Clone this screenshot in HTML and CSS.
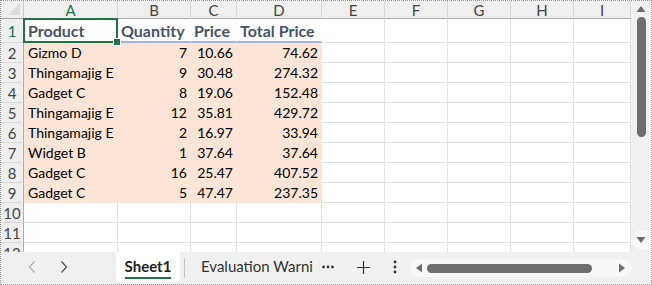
FILE: index.html
```html
<!DOCTYPE html>
<html lang="en">
<head>
    <meta charset="UTF-8">
    <title>Sheet1</title>
    <link rel="stylesheet" href="styles.css">
</head>
<body>
    <div class="frame">
        <div class="main">
            <div class="sheet">
                <div class="grid">
                    <div class="corner"><span class="corner-tri"></span></div>
                    <div class="col-head sel">A</div>
                    <div class="col-head">B</div>
                    <div class="col-head">C</div>
                    <div class="col-head">D</div>
                    <div class="col-head">E</div>
                    <div class="col-head">F</div>
                    <div class="col-head">G</div>
                    <div class="col-head">H</div>
                    <div class="col-head">I</div>

                    <div class="row-head sel first">1</div>
                    <div class="cell head active">Product</div>
                    <div class="cell head line">Quantity</div>
                    <div class="cell head line">Price</div>
                    <div class="cell head line">Total Price</div>
                    <div class="cell first"></div><div class="cell first"></div><div class="cell first"></div><div class="cell first"></div><div class="cell first"></div>

                    <div class="row-head">2</div>
                    <div class="cell data">Gizmo D</div><div class="cell data num">7</div><div class="cell data num">10.66</div><div class="cell data num">74.62</div>
                    <div class="cell"></div><div class="cell"></div><div class="cell"></div><div class="cell"></div><div class="cell"></div>

                    <div class="row-head">3</div>
                    <div class="cell data">Thingamajig E</div><div class="cell data num">9</div><div class="cell data num">30.48</div><div class="cell data num">274.32</div>
                    <div class="cell"></div><div class="cell"></div><div class="cell"></div><div class="cell"></div><div class="cell"></div>

                    <div class="row-head">4</div>
                    <div class="cell data">Gadget C</div><div class="cell data num">8</div><div class="cell data num">19.06</div><div class="cell data num">152.48</div>
                    <div class="cell"></div><div class="cell"></div><div class="cell"></div><div class="cell"></div><div class="cell"></div>

                    <div class="row-head">5</div>
                    <div class="cell data">Thingamajig E</div><div class="cell data num">12</div><div class="cell data num">35.81</div><div class="cell data num">429.72</div>
                    <div class="cell"></div><div class="cell"></div><div class="cell"></div><div class="cell"></div><div class="cell"></div>

                    <div class="row-head">6</div>
                    <div class="cell data">Thingamajig E</div><div class="cell data num">2</div><div class="cell data num">16.97</div><div class="cell data num">33.94</div>
                    <div class="cell"></div><div class="cell"></div><div class="cell"></div><div class="cell"></div><div class="cell"></div>

                    <div class="row-head">7</div>
                    <div class="cell data">Widget B</div><div class="cell data num">1</div><div class="cell data num">37.64</div><div class="cell data num">37.64</div>
                    <div class="cell"></div><div class="cell"></div><div class="cell"></div><div class="cell"></div><div class="cell"></div>

                    <div class="row-head">8</div>
                    <div class="cell data">Gadget C</div><div class="cell data num">16</div><div class="cell data num">25.47</div><div class="cell data num">407.52</div>
                    <div class="cell"></div><div class="cell"></div><div class="cell"></div><div class="cell"></div><div class="cell"></div>

                    <div class="row-head">9</div>
                    <div class="cell data">Gadget C</div><div class="cell data num">5</div><div class="cell data num">47.47</div><div class="cell data num">237.35</div>
                    <div class="cell"></div><div class="cell"></div><div class="cell"></div><div class="cell"></div><div class="cell"></div>

                    <div class="row-head">10</div>
                    <div class="cell"></div><div class="cell"></div><div class="cell"></div><div class="cell"></div>
                    <div class="cell"></div><div class="cell"></div><div class="cell"></div><div class="cell"></div><div class="cell"></div>

                    <div class="row-head">11</div>
                    <div class="cell"></div><div class="cell"></div><div class="cell"></div><div class="cell"></div>
                    <div class="cell"></div><div class="cell"></div><div class="cell"></div><div class="cell"></div><div class="cell"></div>

                    <div class="row-head">12</div>
                    <div class="cell"></div><div class="cell"></div><div class="cell"></div><div class="cell"></div>
                    <div class="cell"></div><div class="cell"></div><div class="cell"></div><div class="cell"></div><div class="cell"></div>
                </div>
            </div>
            <div class="vscroll">
                <svg class="arrow" width="10" height="8" viewBox="0 0 10 8"><path d="M5 1 L9.5 7 L0.5 7 Z" fill="#6e6e6e"/></svg>
                <div class="vthumb"></div>
                <div class="vspace"></div>
                <div class="vdown">
                    <svg class="arrow" width="10" height="8" viewBox="0 0 10 8"><path d="M0.5 1 L9.5 1 L5 7 Z" fill="#6e6e6e"/></svg>
                </div>
            </div>
        </div>
        <div class="tabbar">
            <div class="nav">
                <svg width="10" height="14" viewBox="0 0 10 14"><path d="M7.5 1.5 L2.5 7 L7.5 12.5" fill="none" stroke="#b4b4b4" stroke-width="1.3"/></svg>
                <svg width="10" height="14" viewBox="0 0 10 14"><path d="M2.5 1.5 L7.5 7 L2.5 12.5" fill="none" stroke="#555" stroke-width="1.3"/></svg>
            </div>
            <div class="tab active-tab"><span>Sheet1</span></div>
            <div class="sep"></div>
            <div class="tab other-tab">Evaluation Warni</div>
            <div class="more">
                <svg width="12" height="4" viewBox="0 0 12 4"><circle cx="1.5" cy="2" r="1.4" fill="#333"/><circle cx="6" cy="2" r="1.4" fill="#333"/><circle cx="10.5" cy="2" r="1.4" fill="#333"/></svg>
            </div>
            <div class="add">
                <svg width="13" height="13" viewBox="0 0 13 13"><path d="M6.5 0 V13 M0 6.5 H13" stroke="#333" stroke-width="1.2"/></svg>
            </div>
            <div class="kebab">
                <svg width="4" height="14" viewBox="0 0 4 14"><circle cx="2" cy="2" r="1.4" fill="#333"/><circle cx="2" cy="7" r="1.4" fill="#333"/><circle cx="2" cy="12" r="1.4" fill="#333"/></svg>
            </div>
            <div class="hscroll">
                <svg width="8" height="10" viewBox="0 0 8 10"><path d="M1 5 L7 0.5 L7 9.5 Z" fill="#6e6e6e"/></svg>
                <div class="hthumb"></div>
                <svg width="8" height="10" viewBox="0 0 8 10"><path d="M7 5 L1 0.5 L1 9.5 Z" fill="#6e6e6e"/></svg>
            </div>
        </div>
    </div>
</body>
</html>
```

FILE: styles.css
```css
body {
    margin: 0;
    padding: 0;
    font-family: Lato, "Liberation Sans", sans-serif;
    background: #ffffff;
}

.frame {
    width: 650px;
    height: 283px;
    border: 1px dotted #8a8a8a;
    display: flex;
    flex-direction: column;
    overflow: hidden;
}

.main {
    display: flex;
    height: 251px;
}

.sheet {
    width: 630px;
    overflow: hidden;
}

.grid {
    display: grid;
    grid-template-columns: 23px 94px 73px 46px 85px 63px 63px 63px 63px 57px;
    grid-template-rows: 18px 24px repeat(11, 20px);
}

.corner {
    background: #efefef;
    border-right: 1px solid #c8c8c8;
    border-bottom: 1px solid #ababab;
    position: relative;
}

.corner-tri {
    position: absolute;
    right: 3px;
    bottom: 3px;
    width: 0;
    height: 0;
    border-left: 12px solid transparent;
    border-bottom: 12px solid #dcdcdc;
}

.col-head {
    background: #efefef;
    border-right: 1px solid #d9d9d9;
    border-bottom: 1px solid #ababab;
    color: #444;
    font-size: 15px;
    text-align: center;
    line-height: 18px;
}

.col-head.sel {
    color: #217346;
}

.row-head {
    background: #efefef;
    border-right: 1px solid #ababab;
    border-bottom: 1px solid #d9d9d9;
    color: #444;
    font-size: 15px;
    text-align: center;
    line-height: 20px;
}

.row-head.first {
    line-height: 24px;
}

.row-head.sel {
    color: #217346;
}

.cell {
    border-right: 1px solid #e1e1e1;
    border-bottom: 1px solid #e1e1e1;
    font-size: 14px;
    line-height: 20px;
    padding: 0 4px;
    white-space: nowrap;
    overflow: hidden;
    color: #000;
}

.cell.head {
    font-weight: bold;
    color: #44546a;
    line-height: 24px;
    font-size: 16px;
    padding: 0 3px;
}

.cell.line {
    border-bottom: 2px solid #a5b4dc;
    line-height: 23px;
    border-right-color: #ffffff;
}

.cell.head.active {
    position: relative;
    overflow: visible;
    border-bottom: 2px solid #a5b4dc;
    padding-left: 4px;
}

.cell.head.active::before {
    content: "";
    position: absolute;
    left: -1px;
    top: -1px;
    right: -1px;
    bottom: -2px;
    border: 2px solid #217346;
}

.cell.head.active::after {
    content: "";
    position: absolute;
    right: -4px;
    bottom: -5px;
    width: 6px;
    height: 6px;
    background: #217346;
    border: 1px solid #fff;
    z-index: 2;
}

.cell.data {
    background: #fce4d6;
    border-right-color: #fce4d6;
    border-bottom-color: #fce4d6;
}

.cell.num {
    text-align: right;
    padding-right: 3px;
}

.vscroll {
    width: 20px;
    background: #f0f0f0;
    display: flex;
    flex-direction: column;
    align-items: center;
}

.vscroll .arrow {
    margin-top: 4px;
}

.vthumb {
    width: 9px;
    height: 120px;
    margin-top: 4px;
    background: #6e6e6e;
    border-radius: 5px;
}

.vspace {
    flex: 1;
}

.vdown {
    width: 18px;
    height: 20px;
    background: #f7f7f7;
    border-radius: 9px;
    display: flex;
    justify-content: center;
    align-items: center;
    margin-bottom: 2px;
}

.vdown .arrow {
    margin-top: 0;
}

.tabbar {
    height: 32px;
    background: #f0f0f0;
    display: flex;
    align-items: flex-start;
    font-size: 15px;
    color: #333;
}

.nav {
    width: 115px;
    display: flex;
    gap: 22px;
    padding-left: 26px;
    box-sizing: border-box;
    align-items: center;
    height: 30px;
}

.tab {
    height: 30px;
    line-height: 29px;
    white-space: nowrap;
}

.active-tab {
    width: 64px;
    background: #ffffff;
    border-radius: 0 0 5px 5px;
    text-align: center;
    font-weight: bold;
    color: #222;
}

.active-tab span {
    display: inline-block;
    line-height: 22px;
    padding-top: 2px;
    border-bottom: 2px solid #217346;
}

.sep {
    width: 1px;
    height: 20px;
    background: #c6c6c6;
    margin: 6px 16px 0 4px;
}

.other-tab {
    width: 115px;
    overflow: hidden;
    color: #333;
}

.more {
    height: 30px;
    display: flex;
    align-items: center;
    margin-left: 6px;
}

.add {
    height: 30px;
    display: flex;
    align-items: center;
    margin-left: 23px;
}

.kebab {
    height: 30px;
    display: flex;
    align-items: center;
    margin-left: 23px;
}

.hscroll {
    width: 222px;
    height: 18px;
    margin: 7px 0 0 13px;
    background: #f7f7f7;
    border-radius: 9px;
    display: flex;
    align-items: center;
    padding: 0 6px 0 5px;
    box-sizing: border-box;
    gap: 4px;
}

.hthumb {
    width: 165px;
    height: 9px;
    background: #6e6e6e;
    border-radius: 5px;
    margin-right: auto;
}
```
